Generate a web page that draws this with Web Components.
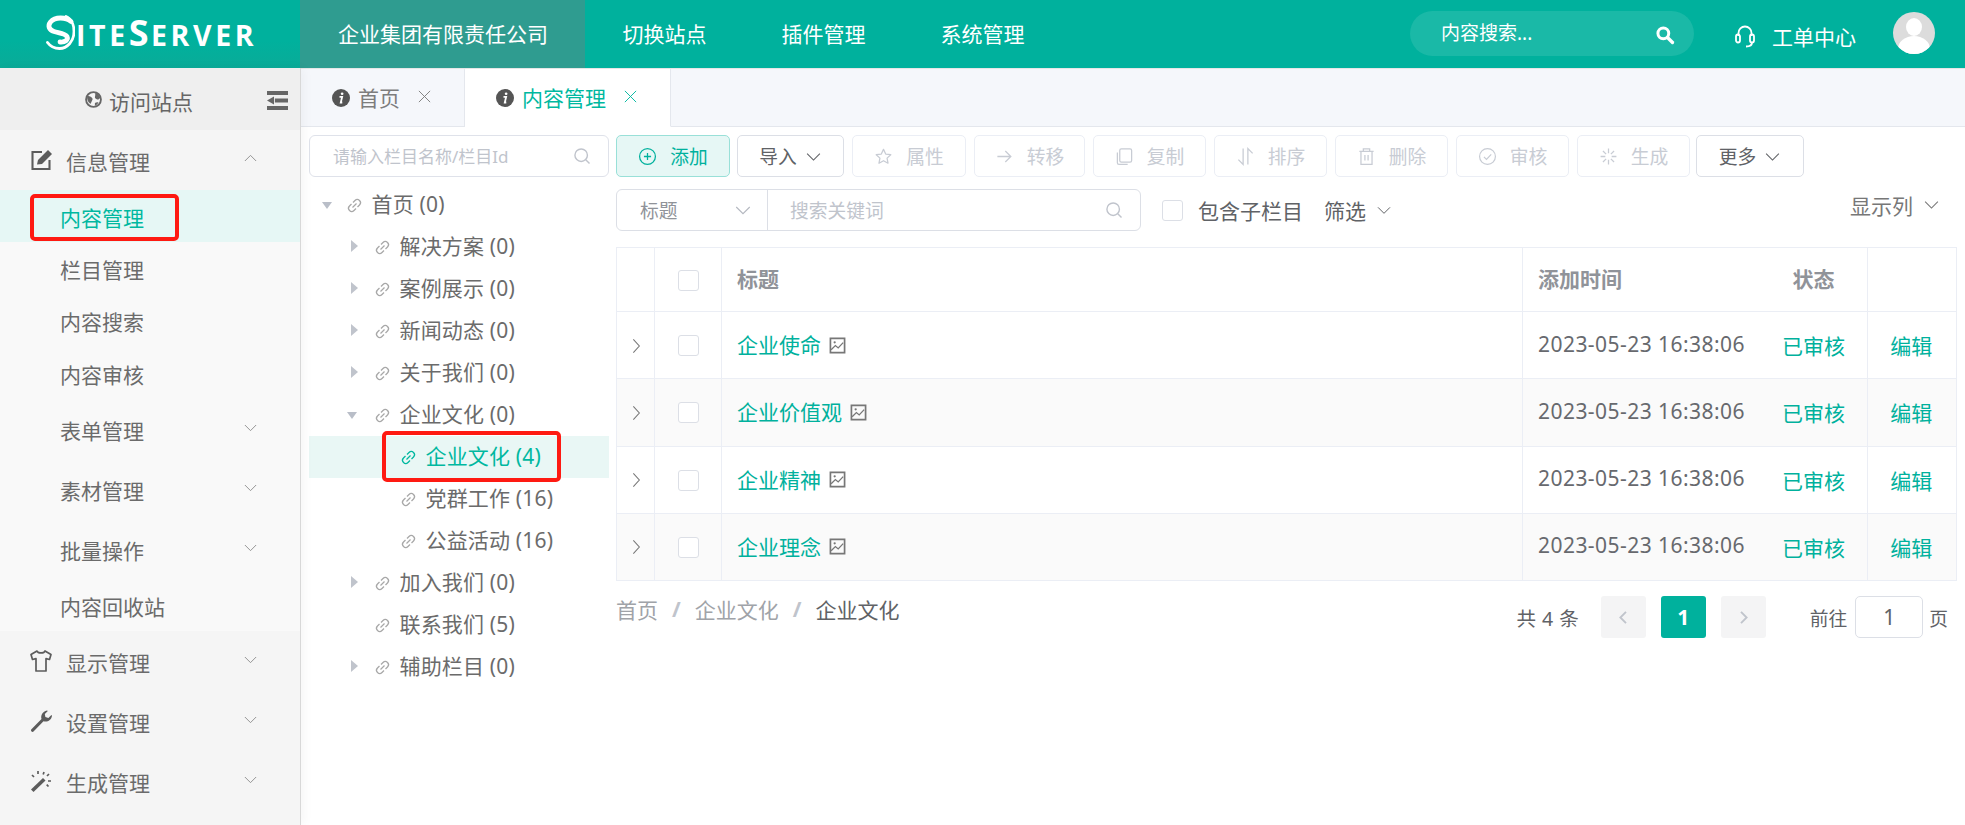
<!DOCTYPE html>
<html lang="zh">
<head>
<meta charset="utf-8">
<title>SiteServer</title>
<style>
  html, body { margin: 0; height: 100%; overflow: hidden; background: #fff; }
  body {
    font-family: "Noto Sans", "Noto Sans CJK SC", sans-serif;
    font-size: 21px;
    color: #606266;
  }
  ss-layout { height: 825px; }
</style>
</head>
<body>
<ss-layout>
  <ss-header slot="header"></ss-header>
  <ss-sidebar slot="sidebar">
    <ss-menu-item icon="edit" chevron="up">信息管理</ss-menu-item>
    <ss-submenu>
      <ss-menu-item sub active marked>内容管理</ss-menu-item>
      <ss-menu-item sub>栏目管理</ss-menu-item>
      <ss-menu-item sub>内容搜索</ss-menu-item>
      <ss-menu-item sub>内容审核</ss-menu-item>
      <ss-menu-item sub tall chevron="down">表单管理</ss-menu-item>
      <ss-menu-item sub tall chevron="down">素材管理</ss-menu-item>
      <ss-menu-item sub tall chevron="down">批量操作</ss-menu-item>
      <ss-menu-item sub>内容回收站</ss-menu-item>
    </ss-submenu>
    <ss-menu-item icon="shirt" chevron="down">显示管理</ss-menu-item>
    <ss-menu-item icon="wrench" chevron="down">设置管理</ss-menu-item>
    <ss-menu-item icon="magic" chevron="down">生成管理</ss-menu-item>
  </ss-sidebar>
  <ss-tabs slot="main">
    <ss-tab>首页</ss-tab>
    <ss-tab active>内容管理</ss-tab>
  </ss-tabs>
  <ss-content slot="main">
    <ss-tree slot="tree">
      <ss-tree-node level="0" caret="open">首页 (0)</ss-tree-node>
      <ss-tree-node level="1" caret="closed">解决方案 (0)</ss-tree-node>
      <ss-tree-node level="1" caret="closed">案例展示 (0)</ss-tree-node>
      <ss-tree-node level="1" caret="closed">新闻动态 (0)</ss-tree-node>
      <ss-tree-node level="1" caret="closed">关于我们 (0)</ss-tree-node>
      <ss-tree-node level="1" caret="open">企业文化 (0)</ss-tree-node>
      <ss-tree-node level="2" selected>企业文化 (4)</ss-tree-node>
      <ss-tree-node level="2">党群工作 (16)</ss-tree-node>
      <ss-tree-node level="2">公益活动 (16)</ss-tree-node>
      <ss-tree-node level="1" caret="closed">加入我们 (0)</ss-tree-node>
      <ss-tree-node level="1">联系我们 (5)</ss-tree-node>
      <ss-tree-node level="1" caret="closed">辅助栏目 (0)</ss-tree-node>
    </ss-tree>
    <ss-toolbar>
      <ss-btn type="primary" icon="plus" w="114">添加</ss-btn>
      <ss-btn arrow w="107" style="margin-left:-1px">导入</ss-btn>
      <ss-btn disabled icon="star" w="114">属性</ss-btn>
      <ss-btn disabled icon="right" w="111">转移</ss-btn>
      <ss-btn disabled icon="copy" w="113">复制</ss-btn>
      <ss-btn disabled icon="sort" w="113">排序</ss-btn>
      <ss-btn disabled icon="trash" w="113">删除</ss-btn>
      <ss-btn disabled icon="check" w="113">审核</ss-btn>
      <ss-btn disabled icon="spin" w="113">生成</ss-btn>
      <ss-btn arrow w="108" style="margin-left:-2px">更多</ss-btn>
    </ss-toolbar>
    <ss-filter-bar></ss-filter-bar>
    <ss-table>
      <ss-table-row head title="标题" time="添加时间" status="状态"></ss-table-row>
      <ss-table-row title="企业使命" time="2023-05-23 16:38:06" status="已审核" action="编辑"></ss-table-row>
      <ss-table-row alt title="企业价值观" time="2023-05-23 16:38:06" status="已审核" action="编辑"></ss-table-row>
      <ss-table-row title="企业精神" time="2023-05-23 16:38:06" status="已审核" action="编辑"></ss-table-row>
      <ss-table-row alt title="企业理念" time="2023-05-23 16:38:06" status="已审核" action="编辑"></ss-table-row>
    </ss-table>
    <ss-footer></ss-footer>
  </ss-content>
</ss-layout>

<script>
const ICONS = {
  edit: `<path d="M13 4H3.500v17h17v-9" fill="none" stroke="currentColor" stroke-width="2.100"/><path d="M8 16.500l1-4.500L19 2l4 4-10 10z" fill="currentColor"/>`,
  shirt: `<path d="M8 2 2 5.500l1.500 5 3.500-.8V22h10V9.700l3.500.8 1.500-5L16 2c-.8 2.600-7.200 2.600-8 0z" fill="none" stroke="currentColor" stroke-width="1.700" stroke-linejoin="round"/>`,
  wrench: `<path d="M2.200 20.500 12.500 10c-1-3.500 1-7.500 5.500-8.500l.8.6-3 3 .6 3 3 .8 3-3 .6.8c-.6 4.500-4.800 6.800-8.500 5.500L4.500 22.600c-1.300 1-3.300-.8-2.300-2.100z" fill="currentColor"/>`,
  magic: `<path d="M2 20.500 14 9l2.500 2.500L4.500 23z" fill="currentColor"/><path d="M9 2v3M15 3l-.8 2.500M20 5l-2 2M22 12h-3M19.500 17.500l-1.800-1.800M3 6l2 2" stroke="currentColor" stroke-width="1.700" fill="none"/>`,
  search: `<circle cx="11" cy="11" r="7.500" fill="none" stroke="currentColor" stroke-width="1.700"/><path d="m16.500 16.500 4.500 4.500" stroke="currentColor" stroke-width="1.700" fill="none"/>`,
  down: `<path d="m3 8 9 9 9-9" fill="none" stroke="currentColor" stroke-width="1.500"/>`,
  up: `<path d="m3 16 9-9 9 9" fill="none" stroke="currentColor" stroke-width="1.500"/>`,
  chevron: `<path d="m8 2 9 10-9 10" fill="none" stroke="currentColor" stroke-width="1.600"/>`,
  back: `<path d="m16 3-9 9 9 9" fill="none" stroke="currentColor" stroke-width="3"/>`,
  next: `<path d="m8 3 9 9-9 9" fill="none" stroke="currentColor" stroke-width="3"/>`,
  plus: `<circle cx="12" cy="12" r="10" fill="none" stroke="currentColor" stroke-width="1.600"/><path d="M12 7.500v9M7.500 12h9" stroke="currentColor" stroke-width="1.600"/>`,
  star: `<path d="m12 3 2.800 5.900 6.400.8-4.700 4.400 1.200 6.400L12 17.300l-5.700 3.200 1.200-6.400-4.700-4.400 6.400-.8z" fill="none" stroke="currentColor" stroke-width="1.600" stroke-linejoin="round"/>`,
  right: `<path d="M3 12h17M13 5l7 7-7 7" fill="none" stroke="currentColor" stroke-width="1.600"/>`,
  copy: `<path d="M8 2.500h11a2 2 0 0 1 2 2v12.500a2 2 0 0 1-2 2H8a2 2 0 0 1-2-2V4.500a2 2 0 0 1 2-2z" fill="none" stroke="currentColor" stroke-width="1.600"/><path d="M3 7v13a2 2 0 0 0 2 2h11" fill="none" stroke="currentColor" stroke-width="1.600"/>`,
  sort: `<path d="M9 2v20L3 16M15 22V2l6 6" fill="none" stroke="currentColor" stroke-width="1.600"/>`,
  trash: `<path d="M3 5.500h18M8 5V2.500h8V5M5 5.500V22h14V5.500M10 10v7M14 10v7" fill="none" stroke="currentColor" stroke-width="1.600"/>`,
  check: `<circle cx="12" cy="12" r="10" fill="none" stroke="currentColor" stroke-width="1.500"/><path d="m7.500 12.500 3.200 3.200 6-6.500" fill="none" stroke="currentColor" stroke-width="1.500"/>`,
  spin: `<path d="M12 2v6M12 16v6M2 12h6M16 12h6M5 5l4 4M15 15l4 4M19 5l-4 4M9 15l-4 4" fill="none" stroke="currentColor" stroke-width="1.600"/>`,
  link: `<g fill="none" stroke="currentColor" stroke-width="1.800" transform="rotate(45 12 12)"><path d="M7.500 10.500V6.500a4.500 4.500 0 0 1 9 0v4"/><path d="M7.500 13.500v4a4.500 4.500 0 0 0 9 0v-4"/><path d="M12 8v8"/></g>`,
  picture: `<path d="M2 2h20v20H2z" fill="none" stroke="currentColor" stroke-width="2.400"/><path d="m3 18 6-6 4 3.500 7-7.500" fill="none" stroke="currentColor" stroke-width="1.800"/><circle cx="8" cy="7.500" r="1.600" fill="currentColor"/>`,
  close: `<path d="m3 3 18 18M21 3 3 21" fill="none" stroke="currentColor" stroke-width="1.500"/>`,
  info: `<circle cx="12" cy="12" r="12" fill="currentColor"/><path d="M10 10.500h3.500l-1.800 7.500h2" fill="none" stroke="#fff" stroke-width="2.400"/><circle cx="13.500" cy="6.300" r="1.800" fill="#fff"/>`,
  globe: `<circle cx="12" cy="12" r="10.500" fill="#f4f4f4" stroke="currentColor" stroke-width="2.600"/><path d="M3 7c2.500 0 4 .5 5.500 1.500 2 1.300 3 3 1.500 5L8 18c-2.500-1-5.500-5-5-11zM14.500 2.500c3 .5 5.500 3 7 6.500-1 2-2.500 3.500-4.500 3-1-1.500-3.500-1-3-3.500.5-1.500.5-3.500.5-6zM14 17c1.500-1 3-1.500 5-1-1 2.500-3 4-5 5z" fill="currentColor"/>`,
  outdent: `<path d="M0 3.500h24M9 12h15M0 20.500h24" stroke="currentColor" stroke-width="4.600" fill="none"/><path d="M8 7.500v9L0 12z" fill="currentColor"/>`,
  headset: `<g fill="none" stroke="currentColor" stroke-width="1.800"><path d="M5.500 12V9a6.500 6.500 0 0 1 13 0v3"/><rect x="3" y="10.500" width="4" height="8" rx="2"/><rect x="17" y="10.500" width="4" height="8" rx="2"/><path d="M19 18.500c0 2.500-2.500 4-6 4"/></g>`,
  zoom: `<circle cx="10" cy="10" r="6.500" fill="none" stroke="currentColor" stroke-width="3.600"/><path d="m15 15 6 6" stroke="currentColor" stroke-width="4" stroke-linecap="round"/>`
};

// base class: clones the element's template into an open shadow root
class SsElement extends HTMLElement {
  constructor() {
    super();
    this.attachShadow({ mode: 'open' });
    const template = document.createElement('template');
    template.innerHTML = this.constructor.html;
    this.shadowRoot.appendChild(template.content.cloneNode(true));
  }
}

class SsIcon extends HTMLElement {
  static get observedAttributes() { return ['name']; }
  constructor() {
    super();
    this.attachShadow({ mode: 'open' });
  }
  connectedCallback() { this.render(); }
  attributeChangedCallback() { this.render(); }
  render() {
    const size = this.getAttribute('size') || 18;
    this.shadowRoot.innerHTML = `
      <style>
        :host { display: inline-flex; flex: none; width: ${size}px; height: ${size}px; }
        svg { width: 100%; height: 100%; display: block; overflow: visible; }
      </style>
      <svg viewBox="0 0 24 24">${ICONS[this.getAttribute('name')] || ''}</svg>`;
  }
}
customElements.define('ss-icon', SsIcon);

class SsLayout extends SsElement {
  static html = `
    <style>
      :host { display: grid; grid-template-columns: 301px 1fr; grid-template-rows: 68px 1fr; }
      .header { grid-column: 1 / 3; }
      .main { display: flex; flex-direction: column; min-width: 0; }
    </style>
    <div class="header"><slot name="header"></slot></div>
    <slot name="sidebar"></slot>
    <div class="main"><slot name="main"></slot></div>`;
}
customElements.define('ss-layout', SsLayout);

class SsHeader extends SsElement {
  static html = `
    <style>
      :host { display: flex; height: 68px; background: #00b19d; color: #fff; align-items: stretch; box-shadow: 0 1px 0 #e6e6e6; position: relative; }
      .logo { width: 300px; flex: none; box-sizing: border-box; padding: 15px 0 0 45px; display: flex; background: linear-gradient(#00b19d 60%, #0aab98); }
      .logo svg { width: 30px; height: 35px; flex: none; }
      .word { font: 700 28.500px/35px "Open Sans", sans-serif; letter-spacing: 3.600px; white-space: nowrap; margin-left: 1px; }
      .word b { font-weight: 700; font-size: 36px; letter-spacing: 2.500px; }
      nav { display: flex; }
      nav a { display: flex; align-items: center; padding: 0 37.500px 2px; white-space: nowrap; }
      nav a.on { background: #2f9c90; width: 285px; box-sizing: border-box; padding: 0 0 2px 38px; }
      .right { margin-left: auto; display: flex; align-items: flex-start; }
      .search { width: 284px; height: 45px; margin-top: 11px; border-radius: 23px; background: rgba(255,255,255,.1); box-sizing: border-box; padding: 0 19px 0 31px; display: flex; align-items: center; justify-content: space-between; font-size: 19px; }
      .search span { padding-bottom: 3px; }
      .search ss-icon { margin-top: 3px; }
      .work { display: flex; align-items: center; height: 72px; margin-left: 39px; gap: 15px; }
      .avatar { width: 42px; height: 42px; margin: 12px 30px 0 37px; border-radius: 50%; overflow: hidden; }
      .avatar svg { display: block; width: 100%; height: 100%; }
    </style>
    <div class="logo">
      <svg viewBox="0 0 30 35"><g fill="none" stroke="#fff" stroke-linecap="round">
        <path d="M26 6.500C21 2 10 1.500 5.500 7 2.500 11 4 15 9 16.500c5 1.500 11 1.500 13 5 1.500 3.500-2 6-7 5.500" stroke-width="4.800"/>
        <path d="M21 1.500c5 2 8 8 8 15 0 10-7 17-14.500 17C9 33.500 5 31 2.500 27.500" stroke-width="2.800"/>
      </g></svg>
      <div class="word">ITE<b>S</b>ERVER</div>
    </div>
    <nav>
      <a class="on">企业集团有限责任公司</a>
      <a>切换站点</a>
      <a>插件管理</a>
      <a>系统管理</a>
    </nav>
    <div class="right">
      <div class="search"><span>内容搜索...</span><ss-icon name="zoom" size="20"></ss-icon></div>
      <div class="work"><ss-icon name="headset" size="24"></ss-icon><span>工单中心</span></div>
      <div class="avatar"><svg viewBox="0 0 42 42"><rect width="42" height="42" fill="#dcdcdc"/><ellipse cx="21" cy="15" rx="8" ry="9" fill="#fff"/><ellipse cx="21" cy="37" rx="16" ry="13" fill="#fff"/></svg></div>
    </div>`;
}
customElements.define('ss-header', SsHeader);

class SsSidebar extends SsElement {
  static html = `
    <style>
      :host { display: block; background: #f5f5f5; border-right: 1px solid #d8d8d8; box-shadow: 3px 0 10px rgba(0,0,0,.04); color: #666; position: relative; z-index: 1; }
      .visit { height: 62px; background: #efefef; display: flex; align-items: center; position: relative; padding-left: 85px; gap: 7px; box-sizing: border-box; }
      .visit span { padding-top: 3px; }
      .toggle { margin-left: auto; margin-right: 12px; display: flex; margin-top: 3px; }
    </style>
    <div class="visit">
      <ss-icon name="globe" size="17"></ss-icon><span>访问站点</span>
      <div class="toggle"><ss-icon name="outdent" size="21"></ss-icon></div>
    </div>
    <slot></slot>`;
}
customElements.define('ss-sidebar', SsSidebar);

class SsSubmenu extends SsElement {
  static html = `<style>:host { display: block; background: #f9f9f9; padding-bottom: 0; }</style><slot></slot>`;
}
customElements.define('ss-submenu', SsSubmenu);

class SsMenuItem extends SsElement {
  static html = `
    <style>
      :host { display: flex; height: 60px; align-items: center; box-sizing: border-box; padding-left: 29px; color: #6b6b6b; position: relative; }
      :host([sub]) { height: 52.300px; padding-left: 60px; }
      :host([tall]) { height: 60px; }
      :host([active]) { background: #e6f7f5; color: #00b8a0; }
      .ic { display: flex; margin-right: 13px; color: #5c5c5c; }
      .ic:empty { display: none; }
      .label { padding-top: 1px; white-space: nowrap; }
      :host([tall]) .label { padding-top: 2px; }
      .chev { position: absolute; left: 243px; top: 50%; margin-top: -9px; color: #8f8f8f; display: flex; }
      .mark { display: none; position: absolute; left: 30px; top: 4px; width: 149px; height: 47px; border: 4px solid #fe1a12; border-radius: 5px; box-sizing: border-box; }
      :host([marked]) .mark { display: block; }
    </style>
    <span class="ic"></span>
    <span class="label"><slot></slot></span>
    <span class="chev"></span>
    <span class="mark"></span>`;
  connectedCallback() {
    const icon = this.getAttribute('icon');
    const chevron = this.getAttribute('chevron');
    if (icon) this.shadowRoot.querySelector('.ic').innerHTML = `<ss-icon name="${icon}" size="24"></ss-icon>`;
    if (chevron) this.shadowRoot.querySelector('.chev').innerHTML = `<ss-icon name="${chevron}" size="15"></ss-icon>`;
  }
}
customElements.define('ss-menu-item', SsMenuItem);

class SsTabs extends SsElement {
  static html = `
    <style>
      :host { display: flex; height: 59px; flex: none; background: #f5f7fb; box-shadow: inset 0 -1px 0 #e4e7ed; }
    </style>
    <slot></slot>`;
}
customElements.define('ss-tabs', SsTabs);

class SsTab extends SsElement {
  static html = `
    <style>
      :host { display: flex; align-items: center; box-sizing: border-box; width: 164px; height: 59px; padding-left: 31px; border-right: 1px solid #e4e7ed; border-bottom: 1px solid #e4e7ed; color: #7d7d7d; }
      :host([active]) { width: 206px; background: #fff; color: #00b8a0; border-bottom-color: #fff; }
      .info { color: #555; display: flex; margin-right: 8px; margin-top: 1px; }
      .label { margin-top: -1px; white-space: nowrap; }
      .x { margin-left: 17px; display: flex; margin-top: -2px; }
    </style>
    <span class="info"><ss-icon name="info" size="18"></ss-icon></span>
    <span class="label"><slot></slot></span>
    <span class="x"><ss-icon name="close" size="15"></ss-icon></span>`;
}
customElements.define('ss-tab', SsTab);

class SsContent extends SsElement {
  static html = `
    <style>
      :host { display: grid; grid-template-columns: 300px 1fr; column-gap: 7px; padding: 8px 8px 0; flex: 1; align-content: start; background: #fff; }
      .tree { grid-row: 1 / 6; }
      .right { display: flex; flex-direction: column; min-width: 0; }
    </style>
    <div class="tree"><slot name="tree"></slot></div>
    <div class="right"><slot></slot></div>`;
}
customElements.define('ss-content', SsContent);

class SsTree extends SsElement {
  static html = `
    <style>
      :host { display: block; }
      .input { height: 42px; box-sizing: border-box; border: 1px solid #dfe2ea; border-radius: 6px; display: flex; align-items: center; justify-content: space-between; padding: 0 16px 0 23px; font-size: 17px; color: #c0c4cc; margin-bottom: 7px; }
      .input span { white-space: nowrap; padding-bottom: 2px; }
    </style>
    <div class="input"><span>请输入栏目名称/栏目Id</span><ss-icon name="search" size="20"></ss-icon></div>
    <slot></slot>`;
}
customElements.define('ss-tree', SsTree);

class SsTreeNode extends SsElement {
  static html = `
    <style>
      :host { display: flex; align-items: center; height: 42px; position: relative; color: #6b6b6b; white-space: nowrap; }
      :host([selected]) { background: #e9f7f5; color: #00b8a0; }
      .caret { position: absolute; width: 0; height: 0; }
      .caret.open { border: 5.500px solid transparent; border-top: 7px solid #b9bec8; border-bottom: 0; }
      .caret.closed { border: 6px solid transparent; border-left: 7px solid #c0c4cc; border-right: 0; }
      .link { color: #a8a8a8; display: flex; margin-right: 8.500px; }
      :host([selected]) .link { color: #00b8a0; }
      .mark { display: none; position: absolute; left: 73px; top: -5px; width: 179px; height: 51px; border: 4px solid #fe1a12; border-radius: 5px; box-sizing: border-box; }
      :host([selected]) .mark { display: block; }
      .label { padding-bottom: 5px; letter-spacing: .18px; }
    </style>
    <span class="caret"></span>
    <span class="link"><ss-icon name="link" size="17"></ss-icon></span>
    <span class="label"><slot></slot></span>
    <span class="mark"></span>`;
  connectedCallback() {
    const level = Number(this.getAttribute('level'));
    const caret = this.getAttribute('caret');
    const indent = [37, 65, 91][level];
    this.style.paddingLeft = indent + 'px';
    const el = this.shadowRoot.querySelector('.caret');
    if (caret) {
      el.classList.add(caret);
      el.style.left = (level === 0 ? 13 : caret === 'open' ? 38 : 42) + 'px';
      el.style.top = caret === 'open' ? '18px' : '14px';
    }
  }
}
customElements.define('ss-tree-node', SsTreeNode);

class SsToolbar extends SsElement {
  static html = `
    <style>:host { display: flex; gap: 8px; height: 42px; flex: none; }</style>
    <slot></slot>`;
}
customElements.define('ss-toolbar', SsToolbar);

class SsBtn extends SsElement {
  static html = `
    <style>
      :host { display: flex; align-items: center; justify-content: center; box-sizing: border-box; height: 42px; border: 1px solid #dcdfe6; border-radius: 5px; font-size: 18.750px; color: #606266; gap: 13px; background: #fff; white-space: nowrap; }
      :host([disabled]) { color: #c8ccd4; border-color: #ebeef5; }
      :host([type=primary]) { background: #e6f7f5; border-color: #99e0d8; color: #00b19d; }
      :host([arrow]) { gap: 8px; }
      .ic, .ar { display: flex; }
      .txt { padding-bottom: 2px; }
    </style>
    <span class="ic"></span>
    <span class="txt"><slot></slot></span>
    <span class="ar"></span>`;
  connectedCallback() {
    this.style.width = this.getAttribute('w') + 'px';
    const icon = this.getAttribute('icon');
    if (icon) this.shadowRoot.querySelector('.ic').innerHTML = `<ss-icon name="${icon}" size="19"></ss-icon>`;
    else this.shadowRoot.querySelector('.ic').remove();
    if (this.hasAttribute('arrow')) this.shadowRoot.querySelector('.ar').innerHTML = `<ss-icon name="down" size="17"></ss-icon>`;
    else this.shadowRoot.querySelector('.ar').remove();
  }
}
customElements.define('ss-btn', SsBtn);

class SsFilterBar extends SsElement {
  static html = `
    <style>
      :host { display: flex; align-items: center; height: 42px; margin-top: 12px; flex: none; position: relative; }
      .group { width: 525px; height: 42px; box-sizing: border-box; border: 1px solid #dcdfe6; border-radius: 6px; display: flex; font-size: 18.750px; }
      .select { width: 151px; border-right: 1px solid #dcdfe6; display: flex; align-items: center; justify-content: space-between; box-sizing: border-box; padding: 0 15px 0 23px; color: #909399; }
      .select ss-icon { color: #b4b8c0; }
      .kw { flex: 1; display: flex; align-items: center; justify-content: space-between; padding: 0 16px 0 22px; color: #c0c4cc; }
      .group span { padding-bottom: 2px; }
      .cb { width: 21px; height: 21px; border: 1px solid #dcdfe6; border-radius: 3px; box-sizing: border-box; margin-left: 21px; flex: none; }
      .inc { margin-left: 15px; white-space: nowrap; }
      .flt { margin-left: 21px; display: flex; align-items: center; gap: 10px; white-space: nowrap; }
      .cols { margin-left: auto; display: flex; align-items: center; gap: 10px; white-space: nowrap; color: #777; margin-top: -11px; margin-right: 17px; }
    </style>
    <div class="group">
      <div class="select"><span>标题</span><ss-icon name="down" size="18"></ss-icon></div>
      <div class="kw"><span>搜索关键词</span><ss-icon name="search" size="20"></ss-icon></div>
    </div>
    <span class="cb"></span><span class="inc">包含子栏目</span>
    <span class="flt">筛选<ss-icon name="down" size="16"></ss-icon></span>
    <span class="cols">显示列<ss-icon name="down" size="17"></ss-icon></span>`;
}
customElements.define('ss-filter-bar', SsFilterBar);

class SsTable extends SsElement {
  static html = `
    <style>
      :host { display: block; margin-top: 16px; width: 1341px; box-sizing: border-box; border: 1px solid #ebeef5; border-bottom: 0; flex: none; }
    </style>
    <slot></slot>`;
}
customElements.define('ss-table', SsTable);

class SsTableRow extends SsElement {
  static html = `
    <style>
      :host { display: grid; grid-template-columns: 38px 67px 801px 238.500px 106px 1fr; height: 67.250px; box-sizing: border-box; border-bottom: 1px solid #ebeef5; background: #fff; }
      :host([head]) { height: 64px; color: #909399; font-weight: 700; }
      :host([alt]) { background: #fafafa; }
      .c { display: flex; align-items: center; box-sizing: border-box; white-space: nowrap; }
      .line { border-right: 1px solid #ebeef5; }
      .exp { justify-content: center; color: #777; padding-top: 1px; }
      .chk { justify-content: center; padding-top: 1px; }
      .box { width: 21px; height: 21px; background: #fff; border: 1px solid #dcdfe6; border-radius: 3px; box-sizing: border-box; }
      .title { padding-left: 15px; gap: 8px; color: #00b19d; }
      .t { padding-bottom: 2px; }
      :host([head]) .t { padding-bottom: 4px; }
      :host([head]) .title { color: #909399; }
      .pic { color: #777; display: flex; }
      .time { padding: 0 0 3px 15px; color: #67696e; letter-spacing: .45px; }
      :host([head]) .time { color: #909399; letter-spacing: 0; padding-bottom: 4px; }
      .status, .action { justify-content: center; color: #00b19d; padding: 0 1px 0 0; }
      :host([head]) .status { color: #909399; padding-bottom: 4px; }
    </style>
    <div class="c exp line"></div>
    <div class="c chk line"><span class="box"></span></div>
    <div class="c title line"><span class="t"></span><span class="pic"></span></div>
    <div class="c time"></div>
    <div class="c status line"></div>
    <div class="c action"></div>`;
  connectedCallback() {
    const $ = s => this.shadowRoot.querySelector(s);
    const head = this.hasAttribute('head');
    $('.t').textContent = this.getAttribute('title');
    this.removeAttribute('title');
    $('.time').textContent = this.getAttribute('time');
    $('.status').textContent = this.getAttribute('status');
    $('.action').textContent = this.getAttribute('action');
    if (!head) {
      $('.exp').innerHTML = `<ss-icon name="chevron" size="16"></ss-icon>`;
      $('.pic').innerHTML = `<ss-icon name="picture" size="17"></ss-icon>`;
    }
  }
}
customElements.define('ss-table-row', SsTableRow);

class SsFooter extends SsElement {
  static html = `
    <style>
      :host { display: flex; justify-content: space-between; margin-top: 15px; width: 1341px; flex: none; align-items: flex-start; }
      .crumbs { display: flex; height: 26px; align-items: center; color: #a0a3a8; white-space: nowrap; }
      .crumbs i { font-style: normal; font-weight: 700; color: #c0c4cc; margin: 0 14px; }
      .crumbs b { font-weight: 400; color: #606266; }
      .pager { display: flex; align-items: center; font-size: 18.750px; white-space: nowrap; margin-right: 9px; }
      .num { width: 45px; height: 42px; border-radius: 3px; background: #f4f4f5; color: #c0c4cc; display: flex; align-items: center; justify-content: center; margin-left: 15px; }
      .num.on { background: #00b19d; color: #fff; font-weight: 700; font-size: 21px; }
      .total { margin-right: 7px; font-size: 19.500px; word-spacing: 1px; }
      .go { margin-left: 44px; }
      .jump { width: 68px; height: 42px; box-sizing: border-box; border: 1px solid #dcdfe6; border-radius: 5px; display: flex; align-items: center; justify-content: center; margin: 0 6px 0 8px; font-size: 21px; }
    </style>
    <div class="crumbs"><span>首页</span><i>/</i><span>企业文化</span><i>/</i><b>企业文化</b></div>
    <div class="pager">
      <span class="total">共 4 条</span>
      <span class="num"><ss-icon name="back" size="15"></ss-icon></span>
      <span class="num on">1</span>
      <span class="num"><ss-icon name="next" size="15"></ss-icon></span>
      <span class="go">前往</span><span class="jump">1</span><span>页</span>
    </div>`;
}
customElements.define('ss-footer', SsFooter);
</script>
</body>
</html>
